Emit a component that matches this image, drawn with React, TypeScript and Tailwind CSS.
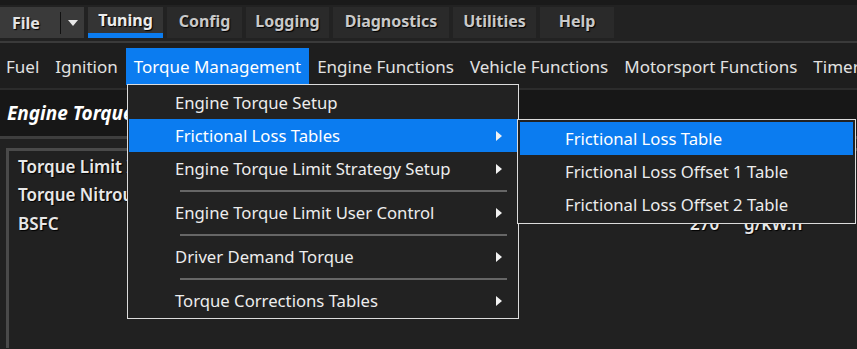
import React from 'react';

const tabs = [
  { label: 'Tuning', w: 'w-[75px]', active: true },
  { label: 'Config', w: 'w-[75px]' },
  { label: 'Logging', w: 'w-[83px]' },
  { label: 'Diagnostics', w: 'w-[116px]' },
  { label: 'Utilities', w: 'w-[83px]' },
  { label: 'Help', w: 'w-[74px]' },
];

const menuBar = ['Fuel', 'Ignition', 'Torque Management', 'Engine Functions', 'Vehicle Functions', 'Motorsport Functions', 'Timer'];

type Entry = { label: string; sub?: boolean; active?: boolean } | 'sep';

const torqueMenu: Entry[] = [
  { label: 'Engine Torque Setup' },
  { label: 'Frictional Loss Tables', sub: true, active: true },
  { label: 'Engine Torque Limit Strategy Setup', sub: true },
  'sep',
  { label: 'Engine Torque Limit User Control', sub: true },
  'sep',
  { label: 'Driver Demand Torque', sub: true },
  'sep',
  { label: 'Torque Corrections Tables', sub: true },
];

const lossTables = ['Frictional Loss Table', 'Frictional Loss Offset 1 Table', 'Frictional Loss Offset 2 Table'];

const Arrow = () => (
  <svg width="6" height="10" viewBox="0 0 6 10" className="absolute right-[15px] top-[12px]">
    <path d="M0 0 L6 5 L0 10 Z" fill="#f2f2f2" />
  </svg>
);

export default function App() {
  return (
    <div className="relative w-[857px] h-[349px] overflow-hidden bg-[#212121] font-['Noto_Sans',sans-serif] text-[#e6e6e6]">
      {/* ribbon tabs */}
      <div className="h-[41px] bg-[#222] border-t-[5px] border-[#1a1a1a] pt-[2px] flex gap-[4px]">
        <div className="w-[84px] h-[31px] bg-[#3a3a3a] flex items-center">
          <span className="pl-[12px] w-[60px] text-[16px] font-bold text-[#e4e4e4] [text-shadow:1px_1px_1px_#000]">File</span>
          <span className="w-[1px] h-[22px] bg-[#111]" />
          <svg width="10" height="6" viewBox="0 0 10 6" className="ml-[7px]">
            <path d="M0 0 H10 L5 6 Z" fill="#e8e8e8" />
          </svg>
        </div>
        {tabs.map(t => (
          <div
            key={t.label}
            className={`${t.w} h-[31px] flex items-center justify-center text-[16px] font-bold [text-shadow:1px_1px_1px_#000] ${
              t.active ? 'bg-[#343434] text-[#ececec] border-b-[5px] border-[#0b7cf0]' : 'bg-[#2a2a2a] text-[#c9c9c9] pb-[3px]'
            }`}
          >
            {t.label}
          </div>
        ))}
      </div>

      {/* menu bar */}
      <div className="h-[47px] border-t-[2px] border-[#3a3a3a] bg-[#1e1e1e] pt-[5px] flex">
        {menuBar.map((m, i) => (
          <div
            key={m}
            className={`h-[37px] flex items-center text-[17px] whitespace-nowrap ${i === 0 ? 'pl-[6px] pr-[8px]' : 'px-[8px]'} ${
              m === 'Torque Management' ? 'bg-[#0b7cf0] text-white' : 'text-[#e2e2e2]'
            }`}
          >
            {m}
          </div>
        ))}
      </div>

      {/* editor panel */}
      <div className="border-t-[2px] border-[#2c2c2c]">
        <div className="h-[46px] bg-[#171717] flex items-center px-[7px] text-[19px] font-bold italic text-white whitespace-nowrap">
          Engine Torque Limits
        </div>
        <div className="h-[3px] bg-[#3e3e3e]" />
        <div className="pt-[9px] pl-[6px]">
          <div className="h-[200px] border-l-[3px] border-t-[3px] border-[#4a4a4a] pl-[9px] pt-[2px] text-[17px] font-semibold text-[#e8e8e8] [text-shadow:1px_1px_1px_#000] whitespace-nowrap">
            <div className="h-[28px] flex items-center">Torque Limit Input Source</div>
            <div className="h-[28px] flex items-center">Torque Nitrous Reduction</div>
            <div className="h-[30px] flex items-center">
              <span className="w-[672px]">BSFC</span>
              <span className="w-[54px]">270</span>
              <span>g/kW.h</span>
            </div>
          </div>
        </div>
      </div>

      {/* torque management dropdown */}
      <div className="absolute left-[127px] top-[84px] w-[392px] border border-[#dcdcdc] bg-[#222] p-[1px] text-[16.7px] text-[#ededed]">
        {torqueMenu.map((e, i) =>
          e === 'sep' ? (
            <div key={i} className="h-[11px] flex items-center pl-[51px] pr-[10px]">
              <div className="h-[2px] w-full bg-[#666]" />
            </div>
          ) : (
            <div
              key={i}
              className={`relative h-[33px] flex items-center pl-[46px] whitespace-nowrap ${e.active ? 'bg-[#0b7cf0] text-white' : ''}`}
            >
              {e.label}
              {e.sub && <Arrow />}
            </div>
          )
        )}
      </div>

      {/* frictional loss submenu */}
      <div className="absolute left-[517px] top-[119px] w-[339px] border border-[#dcdcdc] bg-[#222] p-[2px] text-[16.7px] text-[#ededed]">
        {lossTables.map((l, i) => (
          <div key={l} className={`h-[33px] flex items-center pl-[45px] ${i === 0 ? 'bg-[#0b7cf0] text-white' : ''}`}>
            {l}
          </div>
        ))}
      </div>
    </div>
  );
}
